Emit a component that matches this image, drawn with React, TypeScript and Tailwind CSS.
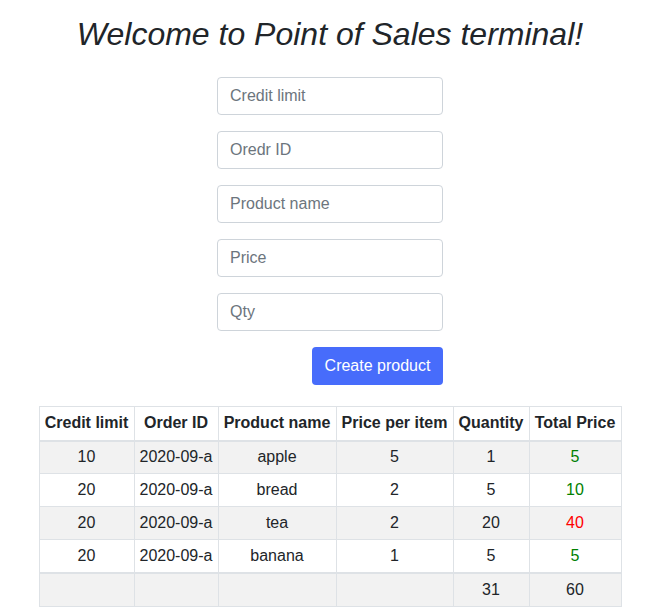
const ROWS = [
  { limit: 10, id: '2020-09-a', name: 'apple', price: 5, qty: 1 },
  { limit: 20, id: '2020-09-a', name: 'bread', price: 2, qty: 5 },
  { limit: 20, id: '2020-09-a', name: 'tea', price: 2, qty: 20 },
  { limit: 20, id: '2020-09-a', name: 'banana', price: 1, qty: 5 },
]

const FIELDS = ['Credit limit', 'Oredr ID', 'Product name', 'Price', 'Qty']

const HEADERS = [
  { label: 'Credit limit', w: 'w-[95px]' },
  { label: 'Order ID', w: 'w-[84px]' },
  { label: 'Product name', w: 'w-[118px]' },
  { label: 'Price per item', w: 'w-[117px]' },
  { label: 'Quantity', w: 'w-[76px]' },
  { label: 'Total Price', w: 'w-[92px]' },
]

export default function App() {
  const totalQty = ROWS.reduce((s, r) => s + r.qty, 0)
  const totalPrice = ROWS.reduce((s, r) => s + r.price * r.qty, 0)

  return (
    <div className="min-h-[615px] bg-white pl-1 font-['Liberation_Sans',Arial,sans-serif] text-[16px] text-[#212529]">
      <h1 className="pt-[15px] text-center text-[32px] leading-[38px] italic">
        Welcome to Point of Sales terminal!
      </h1>

      <form className="mx-auto mt-6 flex w-[226px] flex-col gap-4" onSubmit={(e) => e.preventDefault()}>
        {FIELDS.map((f) => (
          <input
            key={f}
            placeholder={f}
            className="h-[38px] w-full rounded border border-[#ced4da] bg-white px-3 text-[16px] text-[#495057] outline-none placeholder:text-[#6c757d]"
          />
        ))}
        <div className="flex justify-end">
          <button
            type="submit"
            className="h-[38px] w-[131px] rounded bg-[#476cfb] text-[16px] text-white"
          >
            Create product
          </button>
        </div>
      </form>

      <table className="mx-auto mt-[21px] border-collapse text-center">
        <thead>
          <tr className="h-[34px]">
            {HEADERS.map((h) => (
              <th
                key={h.label}
                className={`${h.w} border border-b-2 border-[#dee2e6] p-0 font-bold whitespace-nowrap`}
              >
                {h.label}
              </th>
            ))}
          </tr>
        </thead>
        <tbody>
          {ROWS.map((r, i) => {
            const total = r.price * r.qty
            return (
              <tr key={i} className={`h-[33px] ${i % 2 === 0 ? 'bg-[#f2f2f2]' : 'bg-white'}`}>
                <td className="border border-[#dee2e6] p-0">{r.limit}</td>
                <td className="border border-[#dee2e6] p-0">{r.id}</td>
                <td className="border border-[#dee2e6] p-0">{r.name}</td>
                <td className="border border-[#dee2e6] p-0">{r.price}</td>
                <td className="border border-[#dee2e6] p-0">{r.qty}</td>
                <td
                  className={`border border-[#dee2e6] p-0 ${total > r.limit ? 'text-[#ff0000]' : 'text-[#008000]'}`}
                >
                  {total}
                </td>
              </tr>
            )
          })}
        </tbody>
        <tfoot>
          <tr className="h-[34px] bg-[#f2f2f2]">
            <td className="border border-t-2 border-[#dee2e6] p-0" />
            <td className="border border-t-2 border-[#dee2e6] p-0" />
            <td className="border border-t-2 border-[#dee2e6] p-0" />
            <td className="border border-t-2 border-[#dee2e6] p-0" />
            <td className="border border-t-2 border-[#dee2e6] p-0">{totalQty}</td>
            <td className="border border-t-2 border-[#dee2e6] p-0">{totalPrice}</td>
          </tr>
        </tfoot>
      </table>
    </div>
  )
}
